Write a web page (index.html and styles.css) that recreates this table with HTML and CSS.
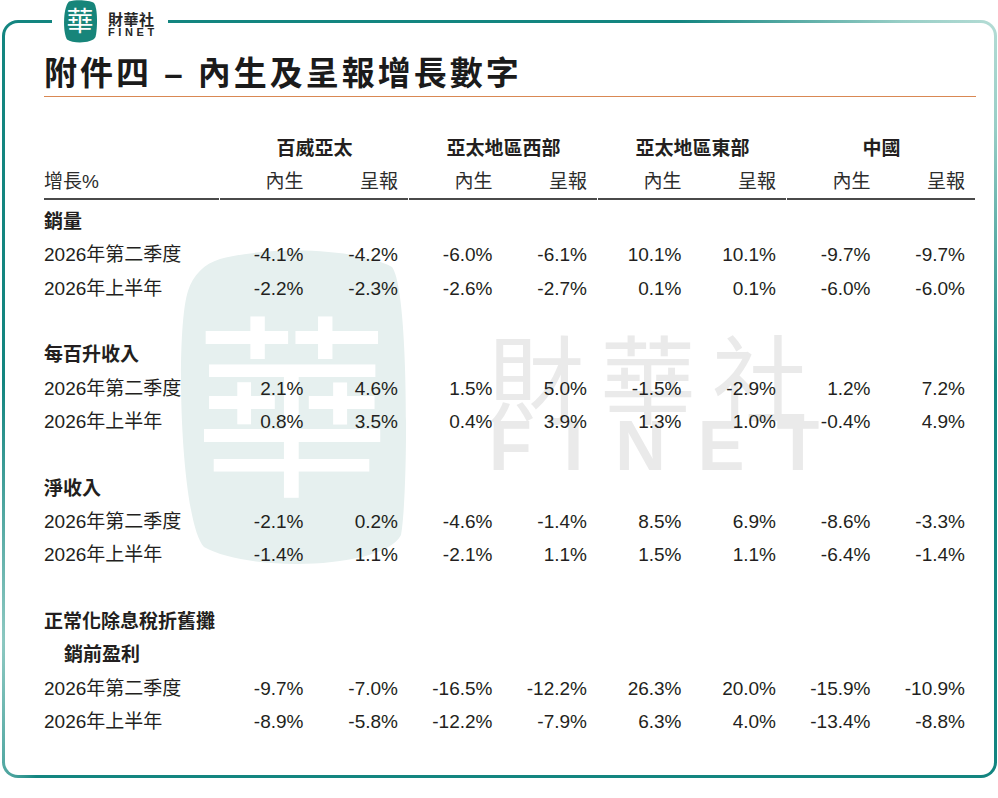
FILE: index.html
```html
<!DOCTYPE html>
<html lang="zh-Hant">
<head>
<meta charset="utf-8">
<title>附件四 – 內生及呈報增長數字</title>
<link rel="stylesheet" href="styles.css">
</head>
<body>
<div class="page">
  <div class="logo">
    <svg class="logo-mark" width="34" height="43" viewBox="0 0 34 43">
      <path d="M6 1.5 C13 -0.5 26 0 31 3 C35 8 34.5 30 32.5 37 C29.5 43.5 10 44 4 39.5 C0 34 -0.5 8 6 1.5Z" fill="#17857a"/>
      <text x="17" y="31" text-anchor="middle" class="logo-glyph">華</text>
    </svg>
    <div class="logo-text">
      <div class="logo-cn">財華社</div>
      <div class="logo-en">FINET</div>
    </div>
  </div>

  <div class="frame">
    <div class="card">
      <div class="wm" aria-hidden="true">
        <svg class="wm-blob" width="229" height="320" viewBox="0 0 229 320">
          <path d="M42 10 C95 -4 182 0 214 18 C232 42 230 250 223 286 C206 320 72 324 26 298 C2 272 -3 82 10 42 C15 26 26 15 42 10Z" fill="#e6f0ef"/>
          <text x="114" y="232" text-anchor="middle" class="wm-glyph">華</text>
        </svg>
        <div class="wm-cn">財華社</div>
        <div class="wm-en">FINET</div>
      </div>

      <div class="content">
        <h1 class="title">附件四 – 內生及呈報增長數字</h1>

        <div class="grid">
          <div class="l"></div>
          <div class="g">百威亞太</div>
          <div class="g">亞太地區西部</div>
          <div class="g">亞太地區東部</div>
          <div class="g">中國</div>

          <div class="l sub">增長%</div>
          <div class="c sub">內生</div><div class="c sub">呈報</div>
          <div class="c sub">內生</div><div class="c sub">呈報</div>
          <div class="c sub">內生</div><div class="c sub">呈報</div>
          <div class="c sub">內生</div><div class="c sub">呈報</div>

          <div class="sep sep-l"></div>
          <div class="sep sep-g"></div>
          <div class="sep sep-g"></div>
          <div class="sep sep-g"></div>
          <div class="sep sep-g"></div>

          <div class="l b full">銷量</div>
          <div class="l">2026年第二季度</div>
          <div class="c">-4.1%</div><div class="c">-4.2%</div><div class="c">-6.0%</div><div class="c">-6.1%</div>
          <div class="c">10.1%</div><div class="c">10.1%</div><div class="c">-9.7%</div><div class="c">-9.7%</div>
          <div class="l">2026年上半年</div>
          <div class="c">-2.2%</div><div class="c">-2.3%</div><div class="c">-2.6%</div><div class="c">-2.7%</div>
          <div class="c">0.1%</div><div class="c">0.1%</div><div class="c">-6.0%</div><div class="c">-6.0%</div>
          <div class="blank"></div>

          <div class="l b full">每百升收入</div>
          <div class="l">2026年第二季度</div>
          <div class="c">2.1%</div><div class="c">4.6%</div><div class="c">1.5%</div><div class="c">5.0%</div>
          <div class="c">-1.5%</div><div class="c">-2.9%</div><div class="c">1.2%</div><div class="c">7.2%</div>
          <div class="l">2026年上半年</div>
          <div class="c">0.8%</div><div class="c">3.5%</div><div class="c">0.4%</div><div class="c">3.9%</div>
          <div class="c">1.3%</div><div class="c">1.0%</div><div class="c">-0.4%</div><div class="c">4.9%</div>
          <div class="blank"></div>

          <div class="l b full">淨收入</div>
          <div class="l">2026年第二季度</div>
          <div class="c">-2.1%</div><div class="c">0.2%</div><div class="c">-4.6%</div><div class="c">-1.4%</div>
          <div class="c">8.5%</div><div class="c">6.9%</div><div class="c">-8.6%</div><div class="c">-3.3%</div>
          <div class="l">2026年上半年</div>
          <div class="c">-1.4%</div><div class="c">1.1%</div><div class="c">-2.1%</div><div class="c">1.1%</div>
          <div class="c">1.5%</div><div class="c">1.1%</div><div class="c">-6.4%</div><div class="c">-1.4%</div>
          <div class="blank"></div>

          <div class="l b full">正常化除息稅折舊攤</div>
          <div class="l b full indent">銷前盈利</div>
          <div class="l">2026年第二季度</div>
          <div class="c">-9.7%</div><div class="c">-7.0%</div><div class="c">-16.5%</div><div class="c">-12.2%</div>
          <div class="c">26.3%</div><div class="c">20.0%</div><div class="c">-15.9%</div><div class="c">-10.9%</div>
          <div class="l">2026年上半年</div>
          <div class="c">-8.9%</div><div class="c">-5.8%</div><div class="c">-12.2%</div><div class="c">-7.9%</div>
          <div class="c">6.3%</div><div class="c">4.0%</div><div class="c">-13.4%</div><div class="c">-8.8%</div>
        </div>
      </div>
    </div>
  </div>
</div>
</body>
</html>
```

FILE: styles.css
```css
* { box-sizing: border-box; }

html, body {
  margin: 0;
  padding: 0;
  background: #ffffff;
}

body {
  font-family: "Liberation Sans", "Noto Sans CJK TC", sans-serif;
  color: #231f20;
}

.page {
  position: relative;
  width: 998px;
  height: 798px;
  overflow: hidden;
}

/* ---------- logo over the top border ---------- */
.logo {
  position: absolute;
  left: 52px;
  top: 0;
  width: 116px;
  height: 44px;
  background: #ffffff;
  display: flex;
  align-items: flex-start;
  padding-left: 11px;
  gap: 11px;
  z-index: 5;
}

.logo-mark { display: block; }

.logo-glyph {
  font-family: "Noto Sans CJK TC", sans-serif;
  font-size: 27px;
  font-weight: 400;
  fill: #ffffff;
}

.logo-text {
  display: flex;
  flex-direction: column;
  padding-top: 11px;
}

.logo-cn {
  font-family: "Noto Sans CJK TC", sans-serif;
  font-size: 15px;
  font-weight: 700;
  line-height: 15px;
  color: #262626;
  letter-spacing: 0.5px;
}

.logo-en {
  font-family: "Liberation Sans", sans-serif;
  font-size: 11px;
  font-weight: 700;
  line-height: 11px;
  color: #262626;
  letter-spacing: 3.6px;
  margin-top: 1px;
}

/* ---------- frame ---------- */
.frame {
  margin: 20px 0 0 2px;
  width: 995px;
  height: 758px;
  padding: 3px;
  border-radius: 16px;
  background:
    radial-gradient(ellipse 320px 360px at 100% 0%, #b4dcd5 0%, #98cec6 30%, rgba(20, 134, 128, 0) 100%),
    radial-gradient(ellipse 40px 260px at 0% 82%, rgba(150, 205, 198, 0.95) 0%, rgba(20, 134, 128, 0) 100%),
    #138580;
}

.card {
  position: relative;
  width: 100%;
  height: 100%;
  background: #ffffff;
  border-radius: 13px;
  overflow: hidden;
}

/* ---------- watermark ---------- */
.wm {
  position: absolute;
  inset: 0;
  z-index: 0;
  pointer-events: none;
}

.wm-blob {
  position: absolute;
  left: 173px;
  top: 226px;
}

.wm-glyph {
  font-family: "Noto Sans CJK TC", sans-serif;
  font-size: 196px;
  font-weight: 400;
  fill: #ffffff;
}

.wm-cn {
  position: absolute;
  left: 483px;
  top: 304px;
  font-family: "Noto Sans CJK TC", sans-serif;
  font-size: 96px;
  line-height: 96px;
  letter-spacing: 16px;
  color: #eaeaea;
  white-space: nowrap;
}

.wm-en {
  position: absolute;
  left: 484px;
  top: 388px;
  font-family: "Liberation Sans", sans-serif;
  font-size: 70px;
  line-height: 70px;
  font-weight: 700;
  letter-spacing: 32px;
  color: #eaeaea;
  white-space: nowrap;
}

/* ---------- content ---------- */
.content {
  position: relative;
  z-index: 1;
  padding: 31px 18px 0 39px;
}

.title {
  margin: 0;
  width: 932px;
  font-family: "Liberation Sans", "Noto Sans CJK TC", sans-serif;
  font-size: 33px;
  line-height: 40px;
  font-weight: 700;
  letter-spacing: 3px;
  color: #1b1b1b;
  padding-bottom: 2px;
  border-bottom: 1.5px solid #d98853;
}

.grid {
  margin-top: 34.5px;
  width: 932px;
  display: grid;
  grid-template-columns: 176px repeat(8, 94.5px);
  font-size: 19px;
  line-height: 33.33px;
}

.grid > div { white-space: nowrap; }

.l { text-align: left; }

.c {
  text-align: right;
  padding-right: 11px;
}

.b { font-weight: 700; }

.g {
  grid-column: span 2;
  text-align: center;
  font-weight: 700;
}

.sub { color: #2c2c2c; }

.full { grid-column: 1 / -1; }

.indent { padding-left: 20px; }

.blank {
  grid-column: 1 / -1;
  height: 33.33px;
}

.sep {
  height: 1.5px;
  background: #4a4a4a;
  margin-right: 1px;
  margin-bottom: 5.5px;
}

.sep-g { grid-column: span 2; }
```
